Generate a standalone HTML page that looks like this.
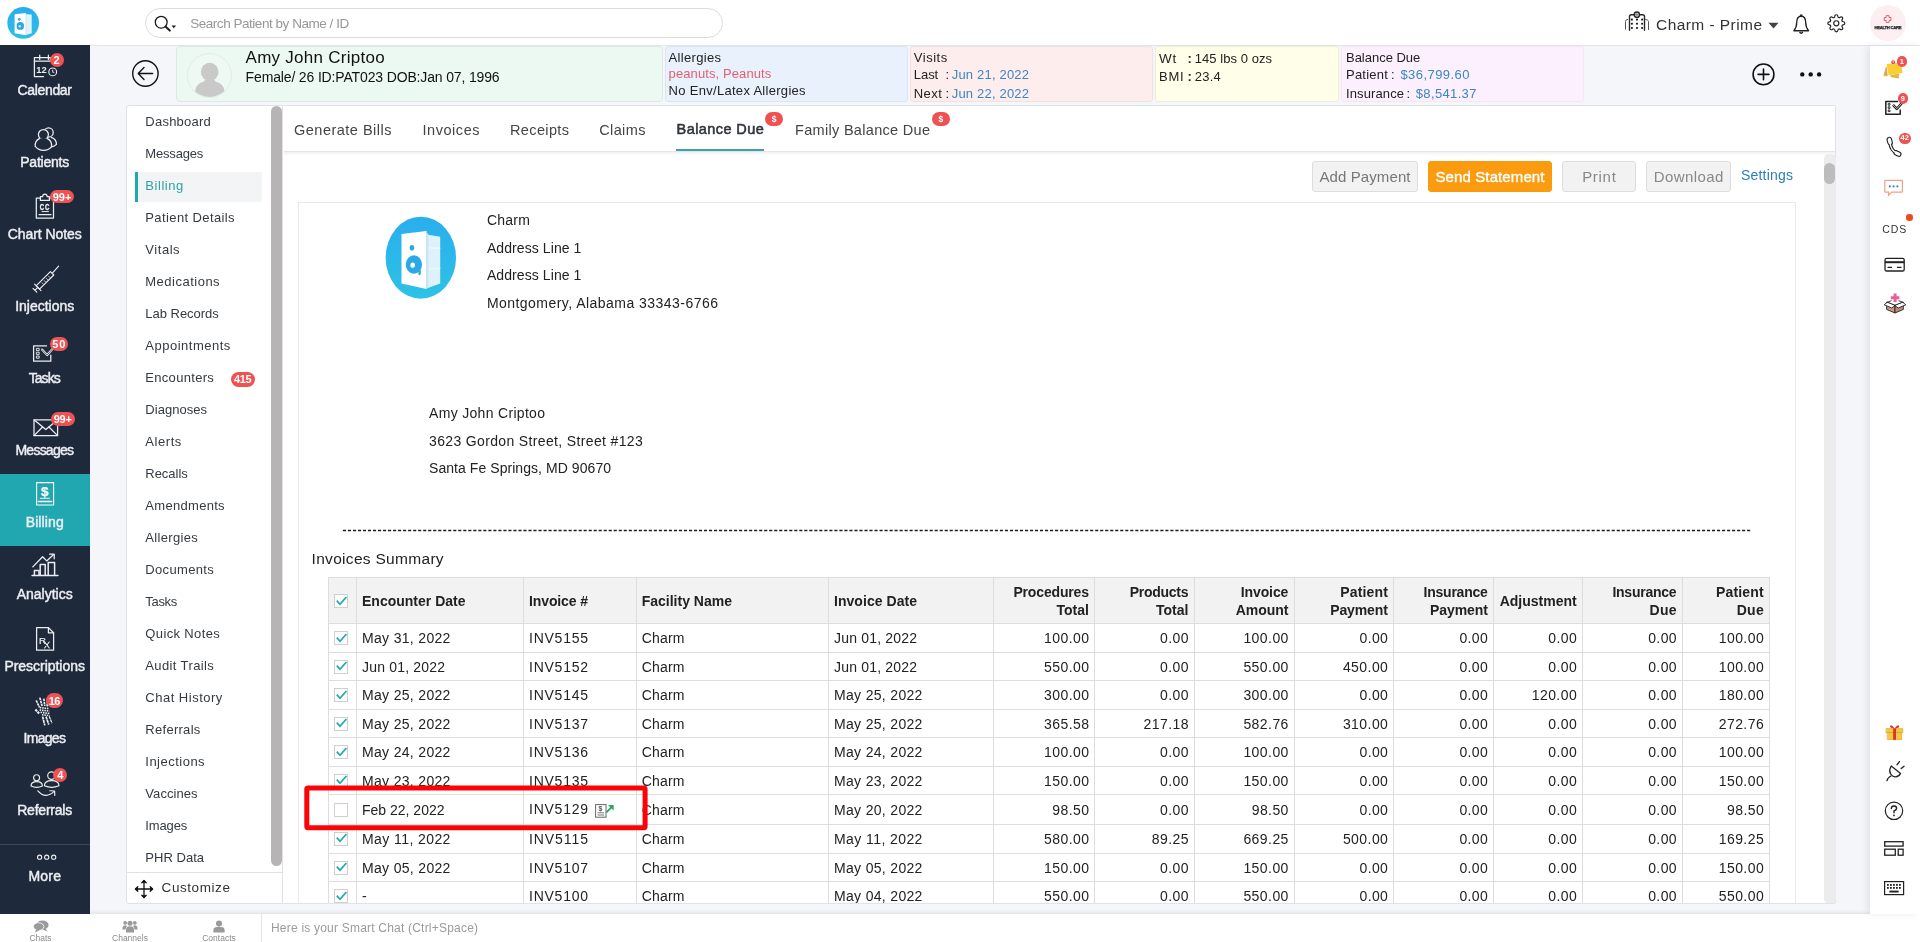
<!DOCTYPE html>
<html><head><meta charset="utf-8"><title>Balance Due</title>
<style>
html,body{margin:0;padding:0;}
body{width:1920px;height:942px;overflow:hidden;position:relative;background:#f5f6fa;font-family:"Liberation Sans",sans-serif;}
.t{position:absolute;white-space:pre;line-height:20px;height:20px;}
.b{position:absolute;box-sizing:border-box;}
svg{position:absolute;overflow:visible;}
.root{position:absolute;left:0;top:0;width:1920px;height:942px;overflow:hidden;will-change:transform;}
</style></head><body><div class="root">
<div class="b" style="left:0px;top:0px;width:1920px;height:46px;background:#fff;border-bottom:1px solid #e3e5ea;"></div>
<svg style="left:7px;top:7px" width="33" height="33" viewBox="0 0 33 33">
<defs><linearGradient id="lg1" x1="0" y1="0" x2="0" y2="1"><stop offset="0" stop-color="#29adee"/><stop offset="1" stop-color="#2cc0e4"/></linearGradient></defs>
<circle cx="16.2" cy="15.95" r="15.85" fill="url(#lg1)"/>
<path d="M7.6 7.2 L18.9 5.9 L18.9 28.2 L7.6 26.2 Z" fill="#fff"/>
<path d="M18.9 7.2 L24.7 7.6 L24.7 26.2 L18.9 27.9 Z" fill="#e3f3fb"/>
<path d="M18.9 6.4 L19.7 7.2 L19.7 27.6 L18.9 28 Z" fill="#cfe6f3"/>
<circle cx="12.3" cy="12.3" r="1.35" fill="#2ba6e0"/>
<ellipse cx="13.3" cy="18.9" rx="3.7" ry="3.9" fill="#2ba6e0"/><circle cx="12.8" cy="19.2" r="1.3" fill="#bfeafa"/>
</svg>
<div class="b" style="left:145px;top:8px;width:578px;height:30px;background:#fff;border:1px solid #dcdcdc;border-radius:15px;"></div>
<svg style="left:152px;top:13px" width="26" height="20" viewBox="0 0 26 20" fill="none" stroke="#1a1a1a" stroke-width="1.3">
<circle cx="9.2" cy="9.2" r="5.9"/><path d="M13.4 13.6 L17.8 17.6" stroke-width="2" stroke-linecap="round"/>
<path d="M19.6 12.4 L24 12.4 L21.8 15.2 Z" fill="#1a1a1a" stroke="none"/></svg>
<span class="t" style="top:13.9px;font-size:13.5px;color:#979797;letter-spacing:-0.464px;left:190.2px;">Search Patient by Name / ID</span>
<svg style="left:1616px;top:4px" width="50" height="38" viewBox="1616 4 50 38" fill="none" stroke="#2a2a2a" stroke-width="1.4" stroke-linecap="round" stroke-linejoin="round">
<path d="M1629.5 30.2 V16.6 Q1629.5 14.7 1631.4 14.7 H1642.6 Q1644.5 14.7 1644.5 16.6 V30.2"/>
<path d="M1627.7 19.3 Q1625.5 19.6 1625.5 21.4 V29" stroke="#555" stroke-width="1"/><path d="M1645.4 19.3 L1647.6 20.2 Q1648.5 20.6 1648.5 21.6 V29.6" stroke="#555" stroke-width="1"/>
<circle cx="1636.9" cy="14.7" r="2.6" fill="#fff" stroke-width="1.5"/><path d="M1636.9 13.4 V16 M1635.6 14.7 H1638.2" stroke="#888" stroke-width="1.3"/>
<g fill="#111" stroke="none"><circle cx="1631.9" cy="19.6" r="1.05"/><circle cx="1637" cy="19.6" r="1.05"/><circle cx="1642.1" cy="19.6" r="1.05"/>
<circle cx="1631.9" cy="23.8" r="1.05"/><circle cx="1637" cy="23.8" r="1.05"/><circle cx="1642.1" cy="23.8" r="1.05"/>
<circle cx="1631.9" cy="28" r="1.05"/><circle cx="1637" cy="28" r="1.05"/><circle cx="1642.1" cy="28" r="1.05"/></g></svg>
<span class="t" style="top:14.6px;font-size:15.5px;color:#333;letter-spacing:0.437px;left:1656px;">Charm - Prime</span>
<svg style="left:1768.4px;top:21.8px" width="11" height="7" viewBox="0 0 11 7"><path d="M0.5 0.8 H10.5 L5.5 6.4 Z" fill="#444"/></svg>
<svg style="left:1791.6px;top:13.2px" width="18.4" height="22.5" viewBox="0 0 18 22" fill="none" stroke="#222" stroke-width="1.3" stroke-linejoin="round">
<path d="M9 3.2 C5.6 3.2 4.6 6.2 4.6 9.4 C4.6 13.6 3.4 15.6 1.8 17.4 H16.2 C14.6 15.6 13.4 13.6 13.4 9.4 C13.4 6.2 12.4 3.2 9 3.2 Z"/>
<path d="M8 2.8 Q9 0.8 10 2.8" /><path d="M7.4 18.4 Q9 21.2 10.6 18.4"/></svg>
<svg style="left:1826.6px;top:13.8px" width="18.6" height="18.6" viewBox="0 0 24 24" fill="none" stroke="#222" stroke-width="1.5" stroke-linejoin="round">
<circle cx="12" cy="12" r="3.3"/>
<path d="M19.4 15a1.65 1.65 0 0 0 .33 1.82l.06.06a2 2 0 1 1-2.83 2.83l-.06-.06a1.65 1.65 0 0 0-1.82-.33 1.65 1.65 0 0 0-1 1.51V21a2 2 0 0 1-4 0v-.09A1.65 1.65 0 0 0 9 19.4a1.65 1.65 0 0 0-1.82.33l-.06.06a2 2 0 1 1-2.83-2.83l.06-.06a1.65 1.65 0 0 0 .33-1.82 1.65 1.65 0 0 0-1.51-1H3a2 2 0 0 1 0-4h.09A1.65 1.65 0 0 0 4.6 9a1.65 1.65 0 0 0-.33-1.82l-.06-.06a2 2 0 1 1 2.83-2.83l.06.06a1.65 1.65 0 0 0 1.82.33H9a1.65 1.65 0 0 0 1-1.51V3a2 2 0 0 1 4 0v.09a1.65 1.65 0 0 0 1 1.51 1.65 1.65 0 0 0 1.82-.33l.06-.06a2 2 0 1 1 2.83 2.83l-.06.06a1.65 1.65 0 0 0-.33 1.82V9a1.65 1.65 0 0 0 1.51 1H21a2 2 0 0 1 0 4h-.09a1.65 1.65 0 0 0-1.51 1z"/></svg>
<div class="b" style="left:1870px;top:5px;width:36px;height:36px;border-radius:50%;background:#fdeef1;"></div>
<svg style="left:1882.4px;top:15px" width="11.2" height="8" viewBox="0 0 14 10" fill="none" stroke="#e4566e" stroke-width="1.2">
<path d="M5.2 0.8 H8.8 V3.2 H11.2 V6.8 H8.8 V9.2 H5.2 V6.8 H2.8 V3.2 H5.2 Z"/></svg>
<span class="t" style="top:17.6px;font-size:4.2px;color:#222;letter-spacing:-0.279px;font-weight:700;left:1587.86px;width:600px;text-align:center;-webkit-text-stroke:0.25px #222;">HEALTH CARE</span>
<svg style="left:131px;top:59px" width="29" height="29" viewBox="0 0 29 29" fill="none" stroke="#111" stroke-width="1.4" stroke-linecap="round" stroke-linejoin="round">
<circle cx="14.4" cy="14.5" r="12.7"/><path d="M21.6 14.5 H7.6 M13 8.6 L7.2 14.5 L13 20.4"/></svg>
<div class="b" style="left:176px;top:46px;width:487px;height:56px;background:#ecf9f2;border:1px solid #dde9e3;border-radius:4px;"></div>
<svg style="left:186.8px;top:52.8px" width="45" height="45" viewBox="0 0 45 45">
<defs><clipPath id="avc"><circle cx="22.5" cy="22.5" r="21.4"/></clipPath></defs>
<circle cx="22.5" cy="22.5" r="22" fill="#eef9f4" stroke="#dde7e2" stroke-width="0.8"/>
<g clip-path="url(#avc)" fill="#c9c9c9"><ellipse cx="22.7" cy="18.8" rx="8.8" ry="9"/><path d="M8 45 V39 Q8 31 17 28.6 L19 25 H26.4 L28.4 28.6 Q37.6 31 37.6 39 V45 Z"/></g></svg>
<span class="t" style="top:47.5px;font-size:17px;color:#111;letter-spacing:0.260px;left:245.6px;">Amy John Criptoo</span>
<span class="t" style="top:67.0px;font-size:14px;color:#111;letter-spacing:-0.149px;left:245.6px;">Female/ 26 ID:PAT023 DOB:Jan 07, 1996</span>
<div class="b" style="left:665px;top:46px;width:243px;height:56px;background:#e9f1fc;border:1px solid #dfe5ee;border-radius:3px;"></div>
<span class="t" style="top:47.6px;font-size:13px;color:#222;letter-spacing:0.331px;left:668.6px;">Allergies</span>
<span class="t" style="top:63.6px;font-size:13px;color:#e26073;letter-spacing:0.101px;left:668.6px;">peanuts, Peanuts</span>
<span class="t" style="top:80.6px;font-size:13px;color:#222;letter-spacing:0.296px;left:668.6px;">No Env/Latex Allergies</span>
<div class="b" style="left:910px;top:46px;width:243px;height:56px;background:#fdeeed;border:1px solid #efe3e2;border-radius:3px;"></div>
<span class="t" style="top:47.6px;font-size:13px;color:#222;letter-spacing:0.515px;left:913.8px;">Visits</span>
<span class="t" style="top:64.8px;font-size:13px;color:#222;letter-spacing:-0.057px;left:913.8px;">Last</span>
<span class="t" style="top:64.8px;font-size:13px;color:#222;left:945.6px;">:</span>
<span class="t" style="top:64.8px;font-size:13px;color:#3b86c4;letter-spacing:0.194px;left:951.7px;">Jun 21, 2022</span>
<span class="t" style="top:83.6px;font-size:13px;color:#222;letter-spacing:0.424px;left:913.8px;">Next</span>
<span class="t" style="top:83.6px;font-size:13px;color:#222;left:945.6px;">:</span>
<span class="t" style="top:83.6px;font-size:13px;color:#3b86c4;letter-spacing:0.194px;left:951.7px;">Jun 22, 2022</span>
<div class="b" style="left:1155px;top:46px;width:184px;height:56px;background:#fffee8;border:1px solid #eeedda;border-radius:3px;"></div>
<span class="t" style="top:48.6px;font-size:13.5px;color:#222;letter-spacing:0.707px;left:1159px;">Wt</span>
<span class="t" style="top:48.6px;font-size:13px;color:#222;font-weight:700;left:1187.6px;">:</span>
<span class="t" style="top:48.6px;font-size:13px;color:#222;letter-spacing:0.050px;left:1194.8px;">145 lbs 0 ozs</span>
<span class="t" style="top:66.6px;font-size:13px;color:#222;letter-spacing:0.744px;left:1159px;">BMI</span>
<span class="t" style="top:66.6px;font-size:13px;color:#222;font-weight:700;left:1187.6px;">:</span>
<span class="t" style="top:66.6px;font-size:13px;color:#222;letter-spacing:0.234px;left:1194.8px;">23.4</span>
<div class="b" style="left:1341px;top:46px;width:243px;height:56px;background:#fceffe;border:1px solid #f3e6f5;border-radius:3px;"></div>
<span class="t" style="top:47.6px;font-size:13px;color:#222;letter-spacing:-0.014px;left:1346px;">Balance Due</span>
<span class="t" style="top:64.9px;font-size:13px;color:#222;letter-spacing:0.222px;left:1346px;">Patient</span>
<span class="t" style="top:64.9px;font-size:13px;color:#222;left:1391px;">:</span>
<span class="t" style="top:64.9px;font-size:13px;color:#3b86c4;letter-spacing:0.449px;left:1400.4px;">$36,799.60</span>
<span class="t" style="top:83.6px;font-size:13px;color:#222;letter-spacing:0.114px;left:1346px;">Insurance</span>
<span class="t" style="top:83.6px;font-size:13px;color:#222;left:1406.4px;">:</span>
<span class="t" style="top:83.6px;font-size:13px;color:#3b86c4;letter-spacing:0.347px;left:1415.8px;">$8,541.37</span>
<svg style="left:1751.4px;top:62px" width="25" height="25" viewBox="0 0 25 25" fill="none" stroke="#111" stroke-width="1.6" stroke-linecap="round">
<circle cx="12.5" cy="12.4" r="10.4"/><path d="M12.5 7 V17.8 M7.1 12.4 H17.9"/></svg>
<svg style="left:1798px;top:70px" width="26" height="8" viewBox="0 0 26 8" fill="#111"><circle cx="4.3" cy="4.4" r="2.2"/><circle cx="12.7" cy="4.4" r="2.2"/><circle cx="21.1" cy="4.4" r="2.2"/></svg>
<div class="b" style="left:126px;top:105px;width:157px;height:799px;background:#fff;border:1px solid #dfe1e5;border-radius:3px 0 0 3px;"></div>
<div class="b" style="left:135px;top:172px;width:127px;height:30px;background:#f3f4f6;"></div>
<div class="b" style="left:135px;top:172px;width:3px;height:30px;background:#21a7b0;"></div>
<span class="t" style="top:111.9px;font-size:13px;color:#343a41;letter-spacing:0.238px;left:145.3px;">Dashboard</span>
<span class="t" style="top:143.9px;font-size:13px;color:#343a41;letter-spacing:-0.178px;left:145.3px;">Messages</span>
<span class="t" style="top:175.9px;font-size:13px;color:#2fa3a8;letter-spacing:0.553px;left:145.3px;">Billing</span>
<span class="t" style="top:207.9px;font-size:13px;color:#343a41;letter-spacing:0.392px;left:145.3px;">Patient Details</span>
<span class="t" style="top:239.9px;font-size:13px;color:#343a41;letter-spacing:0.549px;left:145.3px;">Vitals</span>
<span class="t" style="top:271.9px;font-size:13px;color:#343a41;letter-spacing:0.494px;left:145.3px;">Medications</span>
<span class="t" style="top:303.9px;font-size:13px;color:#343a41;letter-spacing:-0.020px;left:145.3px;">Lab Records</span>
<span class="t" style="top:335.9px;font-size:13px;color:#343a41;letter-spacing:0.501px;left:145.3px;">Appointments</span>
<span class="t" style="top:367.9px;font-size:13px;color:#343a41;letter-spacing:0.305px;left:145.3px;">Encounters</span>
<span class="t" style="top:399.9px;font-size:13px;color:#343a41;letter-spacing:0.047px;left:145.3px;">Diagnoses</span>
<span class="t" style="top:431.9px;font-size:13px;color:#343a41;letter-spacing:0.554px;left:145.3px;">Alerts</span>
<span class="t" style="top:463.9px;font-size:13px;color:#343a41;letter-spacing:-0.021px;left:145.3px;">Recalls</span>
<span class="t" style="top:495.9px;font-size:13px;color:#343a41;letter-spacing:0.302px;left:145.3px;">Amendments</span>
<span class="t" style="top:527.9px;font-size:13px;color:#343a41;letter-spacing:0.331px;left:145.3px;">Allergies</span>
<span class="t" style="top:559.9px;font-size:13px;color:#343a41;letter-spacing:0.344px;left:145.3px;">Documents</span>
<span class="t" style="top:591.9px;font-size:13px;color:#343a41;letter-spacing:-0.307px;left:145.3px;">Tasks</span>
<span class="t" style="top:623.9px;font-size:13px;color:#343a41;letter-spacing:0.370px;left:145.3px;">Quick Notes</span>
<span class="t" style="top:655.9px;font-size:13px;color:#343a41;letter-spacing:0.382px;left:145.3px;">Audit Trails</span>
<span class="t" style="top:687.9px;font-size:13px;color:#343a41;letter-spacing:0.499px;left:145.3px;">Chat History</span>
<span class="t" style="top:719.9px;font-size:13px;color:#343a41;letter-spacing:0.283px;left:145.3px;">Referrals</span>
<span class="t" style="top:751.9px;font-size:13px;color:#343a41;letter-spacing:0.487px;left:145.3px;">Injections</span>
<span class="t" style="top:783.9px;font-size:13px;color:#343a41;letter-spacing:0.074px;left:145.3px;">Vaccines</span>
<span class="t" style="top:815.9px;font-size:13px;color:#343a41;letter-spacing:-0.126px;left:145.3px;">Images</span>
<span class="t" style="top:847.9px;font-size:13px;color:#343a41;letter-spacing:0.040px;left:145.3px;">PHR Data</span>
<div class="b" style="left:230.5px;top:371.5px;width:24.5px;height:15px;background:#ee5253;border-radius:7.5px;"></div>
<span class="t" style="top:369.3px;font-size:11px;color:#fff;letter-spacing:-0.426px;font-weight:700;left:-57.41px;width:600px;text-align:center;">415</span>
<div class="b" style="left:271px;top:106px;width:11px;height:760px;background:#b6b4b5;border-radius:5.5px;"></div>
<div class="b" style="left:127px;top:872px;width:155px;height:1px;background:#e1e1e1;"></div>
<svg style="left:134.3px;top:878.8px" width="20" height="20" viewBox="0 0 20 20" fill="none" stroke="#111" stroke-width="1.3" stroke-linecap="round" stroke-linejoin="round">
<path d="M10 1.6 V18.4 M1.6 10 H18.4"/><path d="M7.8 3.8 L10 1.4 L12.2 3.8 M7.8 16.2 L10 18.6 L12.2 16.2 M3.8 7.8 L1.4 10 L3.8 12.2 M16.2 7.8 L18.6 10 L16.2 12.2" fill="#111"/></svg>
<span class="t" style="top:877.5px;font-size:13.5px;color:#333;letter-spacing:0.567px;left:161.6px;">Customize</span>
<div class="b" style="left:283px;top:105px;width:1553px;height:799px;background:#fff;border:1px solid #e1e3e7;border-left:none;border-radius:0 2px 2px 0;"></div>
<div class="b" style="left:284px;top:151px;width:1551px;height:1px;background:#e4e4e4;"></div>
<div class="b" style="left:284px;top:152px;width:1551px;height:4px;background:linear-gradient(#f1f1f1,#fff);"></div>
<span class="t" style="top:119.8px;font-size:14.5px;color:#444;letter-spacing:0.495px;left:294px;">Generate Bills</span>
<span class="t" style="top:119.8px;font-size:14.5px;color:#444;letter-spacing:0.544px;left:422.5px;">Invoices</span>
<span class="t" style="top:119.8px;font-size:14.5px;color:#444;letter-spacing:0.370px;left:510px;">Receipts</span>
<span class="t" style="top:119.8px;font-size:14.5px;color:#444;letter-spacing:0.379px;left:599.2px;">Claims</span>
<span class="t" style="top:119.1px;font-size:14.5px;color:#30343a;letter-spacing:0.418px;left:676.6px;-webkit-text-stroke:0.55px #30343a;">Balance Due</span>
<div class="b" style="left:676px;top:149px;width:88px;height:2px;background:#38a5a9;"></div>
<span class="t" style="top:119.8px;font-size:14.5px;color:#444;letter-spacing:0.309px;left:795px;">Family Balance Due</span>
<div class="b" style="left:765px;top:111.8px;width:18px;height:14px;border-radius:7px;background:#ee5253;"></div>
<span class="t" style="top:109.1px;font-size:8.5px;color:#fff;font-weight:700;left:474.00px;width:600px;text-align:center;">$</span>
<div class="b" style="left:931.8px;top:111.8px;width:18px;height:14px;border-radius:7px;background:#ee5253;"></div>
<span class="t" style="top:109.1px;font-size:8.5px;color:#fff;font-weight:700;left:640.80px;width:600px;text-align:center;">$</span>
<div class="b" style="left:1312px;top:161px;width:106px;height:31px;border:1px solid #dddddd;border-radius:3px;background:#f2f2f2;"></div>
<span class="t" style="top:166.6px;font-size:15px;color:#777;letter-spacing:0.095px;left:1065.05px;width:600px;text-align:center;">Add Payment</span>
<div class="b" style="left:1428px;top:161px;width:124px;height:31px;border:1px solid #f79a0c;border-radius:3px;background:#fa9b10;"></div>
<span class="t" style="top:166.6px;font-size:15px;color:#fff;letter-spacing:0.110px;left:1190.06px;width:600px;text-align:center;-webkit-text-stroke:0.35px #fff;">Send Statement</span>
<div class="b" style="left:1562px;top:161px;width:74px;height:31px;border:1px solid #dddddd;border-radius:3px;background:#f2f2f2;"></div>
<span class="t" style="top:166.6px;font-size:15px;color:#888;letter-spacing:0.715px;left:1299.36px;width:600px;text-align:center;">Print</span>
<div class="b" style="left:1646px;top:161px;width:85px;height:31px;border:1px solid #dddddd;border-radius:3px;background:#f2f2f2;"></div>
<span class="t" style="top:166.6px;font-size:15px;color:#888;letter-spacing:0.399px;left:1388.70px;width:600px;text-align:center;">Download</span>
<span class="t" style="top:165.3px;font-size:14px;color:#2b7dbb;letter-spacing:0.202px;left:1741px;">Settings</span>
<div class="b" style="left:1824px;top:154px;width:12px;height:750px;background:#ececec;border-radius:5px 5px 5px 5px;"></div>
<div class="b" style="left:1824px;top:163px;width:11px;height:21px;background:#bcbcbc;border-radius:5.5px;"></div>
<div class="b" style="left:298px;top:202px;width:1498px;height:702px;background:#fff;border:1px solid #e9e9e9;border-bottom:none;"></div>
<svg style="left:385px;top:216px" width="72" height="84" viewBox="0 0 72 84">
<defs><linearGradient id="lg2" x1="0" y1="0" x2="0" y2="1"><stop offset="0" stop-color="#2aaeee"/><stop offset="1" stop-color="#2dc2e6"/></linearGradient></defs>
<ellipse cx="35.85" cy="41.65" rx="35.2" ry="41" fill="url(#lg2)"/>
<path d="M16.5 18 L41.5 14.9 L41.5 73 L16.5 67.4 Z" fill="#fff"/>
<path d="M41.5 18.5 L55.2 20.7 L55.2 67.4 L41.5 72.5 Z" fill="#dff1fb"/>
<path d="M41.5 15.6 L43.4 18.8 L43.4 71.8 L41.5 72.8 Z" fill="#cde6f4"/>
<path d="M44 31 L55.2 31.6 L55.2 33 L44 32.4 Z M44 52 L55.2 51.6 L55.2 53 L44 53.4 Z" fill="#eef8fd"/>
<ellipse cx="26.9" cy="31.7" rx="2.3" ry="2.8" fill="#2ba8e6"/>
<ellipse cx="28.9" cy="48.5" rx="8.1" ry="9.3" fill="#2ba8e6"/><ellipse cx="27.7" cy="49.2" rx="2.3" ry="2.6" fill="#fff"/>
<path d="M33.4 52.6 Q37.6 53.4 35 59.4 L33 58 Q34.6 55.4 32 55 Z" fill="#2ba8e6"/>
</svg>
<span class="t" style="top:210.0px;font-size:14px;color:#222;letter-spacing:0.249px;left:486.9px;">Charm</span>
<span class="t" style="top:238.0px;font-size:14px;color:#222;letter-spacing:0.086px;left:486.9px;">Address Line 1</span>
<span class="t" style="top:265.2px;font-size:14px;color:#222;letter-spacing:0.086px;left:486.9px;">Address Line 1</span>
<span class="t" style="top:293.2px;font-size:14px;color:#222;letter-spacing:0.461px;left:486.9px;">Montgomery, Alabama 33343-6766</span>
<span class="t" style="top:403.0px;font-size:14px;color:#222;letter-spacing:0.316px;left:429px;">Amy John Criptoo</span>
<span class="t" style="top:430.8px;font-size:14px;color:#222;letter-spacing:0.353px;left:429px;">3623 Gordon Street, Street #123</span>
<span class="t" style="top:457.8px;font-size:14px;color:#222;letter-spacing:0.059px;left:429px;">Santa Fe Springs, MD 90670</span>
<svg style="left:0;top:520px" width="1920" height="20"><line x1="342.9" y1="10.45" x2="1750.2" y2="10.45" stroke="#1c1c1c" stroke-width="1.35" stroke-dasharray="3.1 1.915"/></svg>
<span class="t" style="top:549.3px;font-size:15.5px;color:#222;letter-spacing:0.302px;left:311.6px;">Invoices Summary</span>
<div class="b" style="left:328px;top:577px;width:1441px;height:46px;background:#f2f2f2;"></div>
<div class="b" style="left:328px;top:577px;width:1442px;height:1px;background:#dddddd;"></div>
<div class="b" style="left:328px;top:623px;width:1442px;height:1px;background:#dddddd;"></div>
<div class="b" style="left:328px;top:652px;width:1442px;height:1px;background:#dddddd;"></div>
<div class="b" style="left:328px;top:680px;width:1442px;height:1px;background:#dddddd;"></div>
<div class="b" style="left:328px;top:709px;width:1442px;height:1px;background:#dddddd;"></div>
<div class="b" style="left:328px;top:737px;width:1442px;height:1px;background:#dddddd;"></div>
<div class="b" style="left:328px;top:766px;width:1442px;height:1px;background:#dddddd;"></div>
<div class="b" style="left:328px;top:794px;width:1442px;height:1px;background:#dddddd;"></div>
<div class="b" style="left:328px;top:824px;width:1442px;height:1px;background:#dddddd;"></div>
<div class="b" style="left:328px;top:853px;width:1442px;height:1px;background:#dddddd;"></div>
<div class="b" style="left:328px;top:881px;width:1442px;height:1px;background:#dddddd;"></div>
<div class="b" style="left:328px;top:577px;width:1px;height:327px;background:#dddddd;"></div>
<div class="b" style="left:356px;top:577px;width:1px;height:327px;background:#dddddd;"></div>
<div class="b" style="left:523px;top:577px;width:1px;height:327px;background:#dddddd;"></div>
<div class="b" style="left:636px;top:577px;width:1px;height:327px;background:#dddddd;"></div>
<div class="b" style="left:828px;top:577px;width:1px;height:327px;background:#dddddd;"></div>
<div class="b" style="left:993px;top:577px;width:1px;height:327px;background:#dddddd;"></div>
<div class="b" style="left:1094px;top:577px;width:1px;height:327px;background:#dddddd;"></div>
<div class="b" style="left:1194px;top:577px;width:1px;height:327px;background:#dddddd;"></div>
<div class="b" style="left:1294px;top:577px;width:1px;height:327px;background:#dddddd;"></div>
<div class="b" style="left:1393px;top:577px;width:1px;height:327px;background:#dddddd;"></div>
<div class="b" style="left:1493px;top:577px;width:1px;height:327px;background:#dddddd;"></div>
<div class="b" style="left:1582px;top:577px;width:1px;height:327px;background:#dddddd;"></div>
<div class="b" style="left:1682px;top:577px;width:1px;height:327px;background:#dddddd;"></div>
<div class="b" style="left:1769px;top:577px;width:1px;height:327px;background:#dddddd;"></div>
<div class="b" style="left:334.3px;top:594px;width:14px;height:14px;background:#fff;border:1px solid #cfcfcf;"></div>
<svg style="left:335.3px;top:594.5px" width="13" height="12" viewBox="0 0 13 12" fill="none" stroke="#21a7b0" stroke-width="1.7"><path d="M1.8 5.6 L5 9.2 L11.4 2"/></svg>
<span class="t" style="top:591.0px;font-size:14px;color:#222;letter-spacing:0.003px;font-weight:700;left:362px;">Encounter Date</span>
<span class="t" style="top:591.0px;font-size:14px;color:#222;letter-spacing:-0.114px;font-weight:700;left:529px;">Invoice #</span>
<span class="t" style="top:591.0px;font-size:14px;color:#222;letter-spacing:0.004px;font-weight:700;left:641.7px;">Facility Name</span>
<span class="t" style="top:591.0px;font-size:14px;color:#222;letter-spacing:0.048px;font-weight:700;left:834px;">Invoice Date</span>
<span class="t" style="top:581.8px;font-size:14px;color:#222;letter-spacing:-0.159px;font-weight:700;right:831.16px;">Procedures</span>
<span class="t" style="top:600.0px;font-size:14px;color:#222;letter-spacing:0.025px;font-weight:700;right:830.97px;">Total</span>
<span class="t" style="top:581.8px;font-size:14px;color:#222;letter-spacing:-0.282px;font-weight:700;right:731.78px;">Products</span>
<span class="t" style="top:600.0px;font-size:14px;color:#222;letter-spacing:0.025px;font-weight:700;right:731.47px;">Total</span>
<span class="t" style="top:581.8px;font-size:14px;color:#222;letter-spacing:-0.089px;font-weight:700;right:631.69px;">Invoice</span>
<span class="t" style="top:600.0px;font-size:14px;color:#222;letter-spacing:-0.035px;font-weight:700;right:631.63px;">Amount</span>
<span class="t" style="top:581.8px;font-size:14px;color:#222;letter-spacing:0.171px;font-weight:700;right:531.93px;">Patient</span>
<span class="t" style="top:600.0px;font-size:14px;color:#222;letter-spacing:-0.109px;font-weight:700;right:532.21px;">Payment</span>
<span class="t" style="top:581.8px;font-size:14px;color:#222;letter-spacing:-0.242px;font-weight:700;right:432.44px;">Insurance</span>
<span class="t" style="top:600.0px;font-size:14px;color:#222;letter-spacing:-0.109px;font-weight:700;right:432.31px;">Payment</span>
<span class="t" style="top:581.8px;font-size:14px;color:#222;letter-spacing:-0.242px;font-weight:700;right:243.64px;">Insurance</span>
<span class="t" style="top:600.0px;font-size:14px;color:#222;letter-spacing:0.277px;font-weight:700;right:243.12px;">Due</span>
<span class="t" style="top:581.8px;font-size:14px;color:#222;letter-spacing:0.171px;font-weight:700;right:156.13px;">Patient</span>
<span class="t" style="top:600.0px;font-size:14px;color:#222;letter-spacing:0.277px;font-weight:700;right:156.02px;">Due</span>
<span class="t" style="top:591.0px;font-size:14px;color:#222;letter-spacing:0.000px;font-weight:700;right:343.30px;">Adjustment</span>
<div class="b" style="left:334.3px;top:631.0px;width:14px;height:14px;background:#fff;border:1px solid #cfcfcf;"></div>
<svg style="left:335.3px;top:631.5px" width="13" height="12" viewBox="0 0 13 12" fill="none" stroke="#21a7b0" stroke-width="1.7"><path d="M1.8 5.6 L5 9.2 L11.4 2"/></svg>
<span class="t" style="top:628.0px;font-size:14px;color:#222;letter-spacing:0.325px;left:362px;">May 31, 2022</span>
<span class="t" style="top:628.0px;font-size:14px;color:#222;letter-spacing:0.753px;left:529px;">INV5155</span>
<span class="t" style="top:628.0px;font-size:14px;color:#222;letter-spacing:0.199px;left:641.7px;">Charm</span>
<span class="t" style="top:628.0px;font-size:14px;color:#222;letter-spacing:0.186px;left:834px;">Jun 01, 2022</span>
<span class="t" style="top:628.0px;font-size:14px;color:#222;letter-spacing:0.437px;right:830.56px;">100.00</span>
<span class="t" style="top:628.0px;font-size:14px;color:#222;letter-spacing:0.385px;right:731.12px;">0.00</span>
<span class="t" style="top:628.0px;font-size:14px;color:#222;letter-spacing:0.437px;right:631.16px;">100.00</span>
<span class="t" style="top:628.0px;font-size:14px;color:#222;letter-spacing:0.385px;right:531.72px;">0.00</span>
<span class="t" style="top:628.0px;font-size:14px;color:#222;letter-spacing:0.385px;right:431.82px;">0.00</span>
<span class="t" style="top:628.0px;font-size:14px;color:#222;letter-spacing:0.385px;right:342.92px;">0.00</span>
<span class="t" style="top:628.0px;font-size:14px;color:#222;letter-spacing:0.385px;right:243.02px;">0.00</span>
<span class="t" style="top:628.0px;font-size:14px;color:#222;letter-spacing:0.437px;right:155.86px;">100.00</span>
<div class="b" style="left:334.3px;top:659.6px;width:14px;height:14px;background:#fff;border:1px solid #cfcfcf;"></div>
<svg style="left:335.3px;top:660.1px" width="13" height="12" viewBox="0 0 13 12" fill="none" stroke="#21a7b0" stroke-width="1.7"><path d="M1.8 5.6 L5 9.2 L11.4 2"/></svg>
<span class="t" style="top:656.6px;font-size:14px;color:#222;letter-spacing:0.186px;left:362px;">Jun 01, 2022</span>
<span class="t" style="top:656.6px;font-size:14px;color:#222;letter-spacing:0.753px;left:529px;">INV5152</span>
<span class="t" style="top:656.6px;font-size:14px;color:#222;letter-spacing:0.199px;left:641.7px;">Charm</span>
<span class="t" style="top:656.6px;font-size:14px;color:#222;letter-spacing:0.186px;left:834px;">Jun 01, 2022</span>
<span class="t" style="top:656.6px;font-size:14px;color:#222;letter-spacing:0.437px;right:830.56px;">550.00</span>
<span class="t" style="top:656.6px;font-size:14px;color:#222;letter-spacing:0.385px;right:731.12px;">0.00</span>
<span class="t" style="top:656.6px;font-size:14px;color:#222;letter-spacing:0.437px;right:631.16px;">550.00</span>
<span class="t" style="top:656.6px;font-size:14px;color:#222;letter-spacing:0.437px;right:531.66px;">450.00</span>
<span class="t" style="top:656.6px;font-size:14px;color:#222;letter-spacing:0.385px;right:431.82px;">0.00</span>
<span class="t" style="top:656.6px;font-size:14px;color:#222;letter-spacing:0.385px;right:342.92px;">0.00</span>
<span class="t" style="top:656.6px;font-size:14px;color:#222;letter-spacing:0.385px;right:243.02px;">0.00</span>
<span class="t" style="top:656.6px;font-size:14px;color:#222;letter-spacing:0.437px;right:155.86px;">100.00</span>
<div class="b" style="left:334.3px;top:688.1500000000001px;width:14px;height:14px;background:#fff;border:1px solid #cfcfcf;"></div>
<svg style="left:335.3px;top:688.6500000000001px" width="13" height="12" viewBox="0 0 13 12" fill="none" stroke="#21a7b0" stroke-width="1.7"><path d="M1.8 5.6 L5 9.2 L11.4 2"/></svg>
<span class="t" style="top:685.2px;font-size:14px;color:#222;letter-spacing:0.325px;left:362px;">May 25, 2022</span>
<span class="t" style="top:685.2px;font-size:14px;color:#222;letter-spacing:0.753px;left:529px;">INV5145</span>
<span class="t" style="top:685.2px;font-size:14px;color:#222;letter-spacing:0.199px;left:641.7px;">Charm</span>
<span class="t" style="top:685.2px;font-size:14px;color:#222;letter-spacing:0.325px;left:834px;">May 25, 2022</span>
<span class="t" style="top:685.2px;font-size:14px;color:#222;letter-spacing:0.437px;right:830.56px;">300.00</span>
<span class="t" style="top:685.2px;font-size:14px;color:#222;letter-spacing:0.385px;right:731.12px;">0.00</span>
<span class="t" style="top:685.2px;font-size:14px;color:#222;letter-spacing:0.437px;right:631.16px;">300.00</span>
<span class="t" style="top:685.2px;font-size:14px;color:#222;letter-spacing:0.385px;right:531.72px;">0.00</span>
<span class="t" style="top:685.2px;font-size:14px;color:#222;letter-spacing:0.385px;right:431.82px;">0.00</span>
<span class="t" style="top:685.2px;font-size:14px;color:#222;letter-spacing:0.437px;right:342.86px;">120.00</span>
<span class="t" style="top:685.2px;font-size:14px;color:#222;letter-spacing:0.385px;right:243.02px;">0.00</span>
<span class="t" style="top:685.2px;font-size:14px;color:#222;letter-spacing:0.437px;right:155.86px;">180.00</span>
<div class="b" style="left:334.3px;top:716.6px;width:14px;height:14px;background:#fff;border:1px solid #cfcfcf;"></div>
<svg style="left:335.3px;top:717.1px" width="13" height="12" viewBox="0 0 13 12" fill="none" stroke="#21a7b0" stroke-width="1.7"><path d="M1.8 5.6 L5 9.2 L11.4 2"/></svg>
<span class="t" style="top:713.6px;font-size:14px;color:#222;letter-spacing:0.325px;left:362px;">May 25, 2022</span>
<span class="t" style="top:713.6px;font-size:14px;color:#222;letter-spacing:0.753px;left:529px;">INV5137</span>
<span class="t" style="top:713.6px;font-size:14px;color:#222;letter-spacing:0.199px;left:641.7px;">Charm</span>
<span class="t" style="top:713.6px;font-size:14px;color:#222;letter-spacing:0.325px;left:834px;">May 25, 2022</span>
<span class="t" style="top:713.6px;font-size:14px;color:#222;letter-spacing:0.437px;right:830.56px;">365.58</span>
<span class="t" style="top:713.6px;font-size:14px;color:#222;letter-spacing:0.437px;right:731.06px;">217.18</span>
<span class="t" style="top:713.6px;font-size:14px;color:#222;letter-spacing:0.437px;right:631.16px;">582.76</span>
<span class="t" style="top:713.6px;font-size:14px;color:#222;letter-spacing:0.437px;right:531.66px;">310.00</span>
<span class="t" style="top:713.6px;font-size:14px;color:#222;letter-spacing:0.385px;right:431.82px;">0.00</span>
<span class="t" style="top:713.6px;font-size:14px;color:#222;letter-spacing:0.385px;right:342.92px;">0.00</span>
<span class="t" style="top:713.6px;font-size:14px;color:#222;letter-spacing:0.385px;right:243.02px;">0.00</span>
<span class="t" style="top:713.6px;font-size:14px;color:#222;letter-spacing:0.437px;right:155.86px;">272.76</span>
<div class="b" style="left:334.3px;top:745.05px;width:14px;height:14px;background:#fff;border:1px solid #cfcfcf;"></div>
<svg style="left:335.3px;top:745.55px" width="13" height="12" viewBox="0 0 13 12" fill="none" stroke="#21a7b0" stroke-width="1.7"><path d="M1.8 5.6 L5 9.2 L11.4 2"/></svg>
<span class="t" style="top:742.0px;font-size:14px;color:#222;letter-spacing:0.325px;left:362px;">May 24, 2022</span>
<span class="t" style="top:742.0px;font-size:14px;color:#222;letter-spacing:0.753px;left:529px;">INV5136</span>
<span class="t" style="top:742.0px;font-size:14px;color:#222;letter-spacing:0.199px;left:641.7px;">Charm</span>
<span class="t" style="top:742.0px;font-size:14px;color:#222;letter-spacing:0.325px;left:834px;">May 24, 2022</span>
<span class="t" style="top:742.0px;font-size:14px;color:#222;letter-spacing:0.437px;right:830.56px;">100.00</span>
<span class="t" style="top:742.0px;font-size:14px;color:#222;letter-spacing:0.385px;right:731.12px;">0.00</span>
<span class="t" style="top:742.0px;font-size:14px;color:#222;letter-spacing:0.437px;right:631.16px;">100.00</span>
<span class="t" style="top:742.0px;font-size:14px;color:#222;letter-spacing:0.385px;right:531.72px;">0.00</span>
<span class="t" style="top:742.0px;font-size:14px;color:#222;letter-spacing:0.385px;right:431.82px;">0.00</span>
<span class="t" style="top:742.0px;font-size:14px;color:#222;letter-spacing:0.385px;right:342.92px;">0.00</span>
<span class="t" style="top:742.0px;font-size:14px;color:#222;letter-spacing:0.385px;right:243.02px;">0.00</span>
<span class="t" style="top:742.0px;font-size:14px;color:#222;letter-spacing:0.437px;right:155.86px;">100.00</span>
<div class="b" style="left:334.3px;top:773.6px;width:14px;height:14px;background:#fff;border:1px solid #cfcfcf;"></div>
<svg style="left:335.3px;top:774.1px" width="13" height="12" viewBox="0 0 13 12" fill="none" stroke="#21a7b0" stroke-width="1.7"><path d="M1.8 5.6 L5 9.2 L11.4 2"/></svg>
<span class="t" style="top:770.6px;font-size:14px;color:#222;letter-spacing:0.325px;left:362px;">May 23, 2022</span>
<span class="t" style="top:770.6px;font-size:14px;color:#222;letter-spacing:0.753px;left:529px;">INV5135</span>
<span class="t" style="top:770.6px;font-size:14px;color:#222;letter-spacing:0.199px;left:641.7px;">Charm</span>
<span class="t" style="top:770.6px;font-size:14px;color:#222;letter-spacing:0.325px;left:834px;">May 23, 2022</span>
<span class="t" style="top:770.6px;font-size:14px;color:#222;letter-spacing:0.437px;right:830.56px;">150.00</span>
<span class="t" style="top:770.6px;font-size:14px;color:#222;letter-spacing:0.385px;right:731.12px;">0.00</span>
<span class="t" style="top:770.6px;font-size:14px;color:#222;letter-spacing:0.437px;right:631.16px;">150.00</span>
<span class="t" style="top:770.6px;font-size:14px;color:#222;letter-spacing:0.385px;right:531.72px;">0.00</span>
<span class="t" style="top:770.6px;font-size:14px;color:#222;letter-spacing:0.385px;right:431.82px;">0.00</span>
<span class="t" style="top:770.6px;font-size:14px;color:#222;letter-spacing:0.385px;right:342.92px;">0.00</span>
<span class="t" style="top:770.6px;font-size:14px;color:#222;letter-spacing:0.385px;right:243.02px;">0.00</span>
<span class="t" style="top:770.6px;font-size:14px;color:#222;letter-spacing:0.437px;right:155.86px;">150.00</span>
<div class="b" style="left:334.3px;top:802.5px;width:14px;height:14px;background:#fff;border:1px solid #cfcfcf;"></div>
<span class="t" style="top:799.5px;font-size:14px;color:#222;letter-spacing:-0.000px;left:362px;">Feb 22, 2022</span>
<span class="t" style="top:798.5px;font-size:14px;color:#222;letter-spacing:0.753px;left:529px;">INV5129</span>
<span class="t" style="top:799.5px;font-size:14px;color:#222;letter-spacing:0.199px;left:641.7px;">Charm</span>
<span class="t" style="top:799.5px;font-size:14px;color:#222;letter-spacing:0.325px;left:834px;">May 20, 2022</span>
<span class="t" style="top:799.5px;font-size:14px;color:#222;letter-spacing:0.417px;right:830.58px;">98.50</span>
<span class="t" style="top:799.5px;font-size:14px;color:#222;letter-spacing:0.385px;right:731.12px;">0.00</span>
<span class="t" style="top:799.5px;font-size:14px;color:#222;letter-spacing:0.417px;right:631.18px;">98.50</span>
<span class="t" style="top:799.5px;font-size:14px;color:#222;letter-spacing:0.385px;right:531.72px;">0.00</span>
<span class="t" style="top:799.5px;font-size:14px;color:#222;letter-spacing:0.385px;right:431.82px;">0.00</span>
<span class="t" style="top:799.5px;font-size:14px;color:#222;letter-spacing:0.385px;right:342.92px;">0.00</span>
<span class="t" style="top:799.5px;font-size:14px;color:#222;letter-spacing:0.385px;right:243.02px;">0.00</span>
<span class="t" style="top:799.5px;font-size:14px;color:#222;letter-spacing:0.417px;right:155.88px;">98.50</span>
<div class="b" style="left:334.3px;top:831.9000000000001px;width:14px;height:14px;background:#fff;border:1px solid #cfcfcf;"></div>
<svg style="left:335.3px;top:832.4000000000001px" width="13" height="12" viewBox="0 0 13 12" fill="none" stroke="#21a7b0" stroke-width="1.7"><path d="M1.8 5.6 L5 9.2 L11.4 2"/></svg>
<span class="t" style="top:828.9px;font-size:14px;color:#222;letter-spacing:0.419px;left:362px;">May 11, 2022</span>
<span class="t" style="top:828.9px;font-size:14px;color:#222;letter-spacing:0.927px;left:529px;">INV5115</span>
<span class="t" style="top:828.9px;font-size:14px;color:#222;letter-spacing:0.199px;left:641.7px;">Charm</span>
<span class="t" style="top:828.9px;font-size:14px;color:#222;letter-spacing:0.419px;left:834px;">May 11, 2022</span>
<span class="t" style="top:828.9px;font-size:14px;color:#222;letter-spacing:0.437px;right:830.56px;">580.00</span>
<span class="t" style="top:828.9px;font-size:14px;color:#222;letter-spacing:0.417px;right:731.08px;">89.25</span>
<span class="t" style="top:828.9px;font-size:14px;color:#222;letter-spacing:0.437px;right:631.16px;">669.25</span>
<span class="t" style="top:828.9px;font-size:14px;color:#222;letter-spacing:0.437px;right:531.66px;">500.00</span>
<span class="t" style="top:828.9px;font-size:14px;color:#222;letter-spacing:0.385px;right:431.82px;">0.00</span>
<span class="t" style="top:828.9px;font-size:14px;color:#222;letter-spacing:0.385px;right:342.92px;">0.00</span>
<span class="t" style="top:828.9px;font-size:14px;color:#222;letter-spacing:0.385px;right:243.02px;">0.00</span>
<span class="t" style="top:828.9px;font-size:14px;color:#222;letter-spacing:0.437px;right:155.86px;">169.25</span>
<div class="b" style="left:334.3px;top:860.75px;width:14px;height:14px;background:#fff;border:1px solid #cfcfcf;"></div>
<svg style="left:335.3px;top:861.25px" width="13" height="12" viewBox="0 0 13 12" fill="none" stroke="#21a7b0" stroke-width="1.7"><path d="M1.8 5.6 L5 9.2 L11.4 2"/></svg>
<span class="t" style="top:857.8px;font-size:14px;color:#222;letter-spacing:0.325px;left:362px;">May 05, 2022</span>
<span class="t" style="top:857.8px;font-size:14px;color:#222;letter-spacing:0.753px;left:529px;">INV5107</span>
<span class="t" style="top:857.8px;font-size:14px;color:#222;letter-spacing:0.199px;left:641.7px;">Charm</span>
<span class="t" style="top:857.8px;font-size:14px;color:#222;letter-spacing:0.325px;left:834px;">May 05, 2022</span>
<span class="t" style="top:857.8px;font-size:14px;color:#222;letter-spacing:0.437px;right:830.56px;">150.00</span>
<span class="t" style="top:857.8px;font-size:14px;color:#222;letter-spacing:0.385px;right:731.12px;">0.00</span>
<span class="t" style="top:857.8px;font-size:14px;color:#222;letter-spacing:0.437px;right:631.16px;">150.00</span>
<span class="t" style="top:857.8px;font-size:14px;color:#222;letter-spacing:0.385px;right:531.72px;">0.00</span>
<span class="t" style="top:857.8px;font-size:14px;color:#222;letter-spacing:0.385px;right:431.82px;">0.00</span>
<span class="t" style="top:857.8px;font-size:14px;color:#222;letter-spacing:0.385px;right:342.92px;">0.00</span>
<span class="t" style="top:857.8px;font-size:14px;color:#222;letter-spacing:0.385px;right:243.02px;">0.00</span>
<span class="t" style="top:857.8px;font-size:14px;color:#222;letter-spacing:0.437px;right:155.86px;">150.00</span>
<div class="b" style="left:334.3px;top:889.4000000000001px;width:14px;height:14px;background:#fff;border:1px solid #cfcfcf;"></div>
<svg style="left:335.3px;top:889.9000000000001px" width="13" height="12" viewBox="0 0 13 12" fill="none" stroke="#21a7b0" stroke-width="1.7"><path d="M1.8 5.6 L5 9.2 L11.4 2"/></svg>
<span class="t" style="top:886.4px;font-size:14px;color:#222;left:362px;">-</span>
<span class="t" style="top:886.4px;font-size:14px;color:#222;letter-spacing:0.753px;left:529px;">INV5100</span>
<span class="t" style="top:886.4px;font-size:14px;color:#222;letter-spacing:0.199px;left:641.7px;">Charm</span>
<span class="t" style="top:886.4px;font-size:14px;color:#222;letter-spacing:0.325px;left:834px;">May 04, 2022</span>
<span class="t" style="top:886.4px;font-size:14px;color:#222;letter-spacing:0.437px;right:830.56px;">550.00</span>
<span class="t" style="top:886.4px;font-size:14px;color:#222;letter-spacing:0.385px;right:731.12px;">0.00</span>
<span class="t" style="top:886.4px;font-size:14px;color:#222;letter-spacing:0.437px;right:631.16px;">550.00</span>
<span class="t" style="top:886.4px;font-size:14px;color:#222;letter-spacing:0.385px;right:531.72px;">0.00</span>
<span class="t" style="top:886.4px;font-size:14px;color:#222;letter-spacing:0.385px;right:431.82px;">0.00</span>
<span class="t" style="top:886.4px;font-size:14px;color:#222;letter-spacing:0.385px;right:342.92px;">0.00</span>
<span class="t" style="top:886.4px;font-size:14px;color:#222;letter-spacing:0.385px;right:243.02px;">0.00</span>
<span class="t" style="top:886.4px;font-size:14px;color:#222;letter-spacing:0.437px;right:155.86px;">550.00</span>
<svg style="left:595px;top:803px" width="20" height="15" viewBox="0 0 20 15" fill="none">
<rect x="0.6" y="1.6" width="10.4" height="12.6" stroke="#666" stroke-width="1"/><path d="M2.6 9.8 H9 M2.6 12 H9" stroke="#666" stroke-width="0.9"/>
<text x="3.4" y="8.4" font-family="Liberation Sans" font-size="7" font-weight="700" fill="#555">$</text>
<path d="M11.4 9.4 L17 3.6" stroke="#2aa65a" stroke-width="1.8"/><path d="M13 2 H18.6 V7.6 Z" fill="#2aa65a"/></svg>
<div class="b" style="left:283px;top:904px;width:1554px;height:9px;background:#f5f6fa;"></div>
<div class="b" style="left:284px;top:903px;width:1551px;height:1px;background:#e1e3e7;"></div>
<svg style="left:0;top:0" width="1920" height="942"><rect x="306.8" y="787.9" width="338.3" height="39.9" rx="1.2" fill="none" stroke="#fb0408" stroke-width="5" stroke-linejoin="round"/></svg>
<div class="b" style="left:0px;top:914px;width:1920px;height:28px;background:#fff;box-shadow:0 -1px 4px rgba(0,0,0,0.11);"></div>
<div class="b" style="left:261px;top:914px;width:1px;height:28px;background:#e4e4e4;"></div>
<span class="t" style="top:918.0px;font-size:12px;color:#9b9b9b;letter-spacing:0.208px;left:271px;">Here is your Smart Chat (Ctrl+Space)</span>
<svg style="left:33px;top:919.6px" width="16" height="13" viewBox="0 0 16 13" fill="#9a9a9a">
<ellipse cx="9.4" cy="5" rx="6.2" ry="4.6"/><path d="M12 8 L14.6 11.6 L9.4 9.4 Z"/>
<ellipse cx="5.6" cy="6.6" rx="5.2" ry="3.9" stroke="#fff" stroke-width="0.8"/><path d="M3.4 9.2 L1.6 12.4 L6.6 10.2 Z"/></svg>
<span class="t" style="top:927.5px;font-size:8.5px;color:#8a8a8a;left:-259.50px;width:600px;text-align:center;">Chats</span>
<svg style="left:122px;top:919.6px" width="16" height="13" viewBox="0 0 16 13" fill="#9a9a9a">
<circle cx="3.2" cy="2.8" r="1.9"/><circle cx="12.8" cy="2.8" r="1.9"/><circle cx="8" cy="3.2" r="2.5"/>
<path d="M0.4 9.4 Q0.4 5.2 3.2 5.2 Q4.4 5.2 5 6 Q3.6 7.4 3.6 9.4 Z"/><path d="M15.6 9.4 Q15.6 5.2 12.8 5.2 Q11.6 5.2 11 6 Q12.4 7.4 12.4 9.4 Z"/>
<path d="M4 12.4 V9.6 Q4 6.2 8 6.2 Q12 6.2 12 9.6 V12.4 Z"/></svg>
<span class="t" style="top:927.5px;font-size:8.5px;color:#8a8a8a;left:-170.00px;width:600px;text-align:center;">Channels</span>
<svg style="left:213px;top:919.6px" width="12" height="13" viewBox="0 0 12 13" fill="#9a9a9a">
<circle cx="6" cy="3.4" r="3"/><path d="M0.4 12.4 V10 Q0.4 6.8 6 6.8 Q11.6 6.8 11.6 10 V12.4 Z"/></svg>
<span class="t" style="top:927.5px;font-size:8.5px;color:#8a8a8a;left:-81.00px;width:600px;text-align:center;">Contacts</span>
<div class="b" style="left:0px;top:45px;width:90px;height:869px;background:#1e293b;"></div>
<div class="b" style="left:0px;top:474px;width:90px;height:72px;background:#21a7b0;"></div>
<div class="b" style="left:0px;top:844px;width:90px;height:1px;background:#3b4759;"></div>
<span class="t" style="top:80.2px;font-size:14px;color:#eceef1;letter-spacing:-0.330px;left:-255.46px;width:600px;text-align:center;-webkit-text-stroke:0.45px #eceef1;">Calendar</span>
<span class="t" style="top:152.2px;font-size:14px;color:#eceef1;letter-spacing:-0.226px;left:-255.41px;width:600px;text-align:center;-webkit-text-stroke:0.45px #eceef1;">Patients</span>
<span class="t" style="top:224.2px;font-size:14px;color:#eceef1;letter-spacing:-0.069px;left:-255.33px;width:600px;text-align:center;-webkit-text-stroke:0.45px #eceef1;">Chart Notes</span>
<span class="t" style="top:296.2px;font-size:14px;color:#eceef1;letter-spacing:-0.016px;left:-255.31px;width:600px;text-align:center;-webkit-text-stroke:0.45px #eceef1;">Injections</span>
<span class="t" style="top:368.2px;font-size:14px;color:#eceef1;letter-spacing:-0.946px;left:-255.77px;width:600px;text-align:center;-webkit-text-stroke:0.45px #eceef1;">Tasks</span>
<span class="t" style="top:440.2px;font-size:14px;color:#eceef1;letter-spacing:-0.758px;left:-255.68px;width:600px;text-align:center;-webkit-text-stroke:0.45px #eceef1;">Messages</span>
<span class="t" style="top:512.2px;font-size:14px;color:#eceef1;letter-spacing:0.108px;left:-255.25px;width:600px;text-align:center;-webkit-text-stroke:0.45px #eceef1;">Billing</span>
<span class="t" style="top:584.2px;font-size:14px;color:#eceef1;letter-spacing:-0.002px;left:-255.30px;width:600px;text-align:center;-webkit-text-stroke:0.45px #eceef1;">Analytics</span>
<span class="t" style="top:656.2px;font-size:14px;color:#eceef1;letter-spacing:-0.034px;left:-255.32px;width:600px;text-align:center;-webkit-text-stroke:0.45px #eceef1;">Prescriptions</span>
<span class="t" style="top:728.2px;font-size:14px;color:#eceef1;letter-spacing:-0.681px;left:-255.64px;width:600px;text-align:center;-webkit-text-stroke:0.45px #eceef1;">Images</span>
<span class="t" style="top:800.2px;font-size:14px;color:#eceef1;letter-spacing:-0.224px;left:-255.41px;width:600px;text-align:center;-webkit-text-stroke:0.45px #eceef1;">Referrals</span>
<span class="t" style="top:866.2px;font-size:14px;color:#eceef1;letter-spacing:0.202px;left:-255.20px;width:600px;text-align:center;-webkit-text-stroke:0.45px #eceef1;">More</span>
<svg style="left:0;top:0" width="90" height="942" viewBox="0 0 90 942" fill="none" stroke="#eceef1" stroke-width="1.25" stroke-linejoin="round" stroke-linecap="round">
<g><path d="M34.4 57.6 H50.4 V60.8 M43.6 76.6 H34.4 V57.6"/><path d="M34.4 61.2 H50"/><path d="M39.7 55 V59.4 M48.4 55 V59.4"/>
<circle cx="52.7" cy="71.9" r="3.9" stroke-width="1.1"/><path d="M52.7 70 V72.3 H54" stroke-width="0.9"/>
<text x="36.2" y="73.4" font-family="Liberation Sans" font-weight="700" font-size="9.4" fill="#eceef1" stroke="none">12</text></g>
<g><circle cx="48.6" cy="132.4" r="4.6"/><path d="M51.4 137.4 Q56.6 139.4 56.4 144.4 Q54.6 146.6 51.6 146.8"/>
<circle cx="43.4" cy="134.6" r="5" fill="#1e293b"/><path d="M39.4 138.6 Q34.8 140.6 35.2 146.4 Q38.6 150.4 43.6 150.4 Q48.6 150.4 51.6 146.6 Q52 140.6 47.4 138.6" fill="#1e293b"/></g>
<g><path d="M40.4 198.2 H36.3 V218 H53.5 V198.2 H49.4"/><path d="M40.4 200.4 V196.6 H42.6 Q42.8 194.2 44.9 194.2 Q47 194.2 47.2 196.6 H49.4 V200.4 Z"/>
<path d="M42 211.6 H48.5" stroke-width="1"/><path d="M39 214.6 H51.1" stroke-width="1.1"/>
<text transform="translate(39.8,209.6) scale(0.78,1.1)" font-family="Liberation Sans" font-weight="700" font-size="7.8" fill="#eceef1" stroke="#eceef1" stroke-width="0.3" letter-spacing="0.9">CC</text></g>
<g stroke-width="1.15"><path d="M58.6 266.2 L52.6 272.8"/><path d="M50.4 271.6 L53.8 275 L39.5 289.2 L36.1 285.8 Z"/>
<path d="M34.6 284.2 L41 290.6"/><path d="M37.6 287.6 L35 290.2"/><path d="M33 288.4 L36.8 292.2"/>
<path d="M44.2 280.6 L45.4 281.8 M46.4 278.4 L47.6 279.6 M48.6 276.2 L49.8 277.4 M42 282.8 L43.2 284" stroke-width="0.8"/></g>
<g><path d="M46.6 345.8 H33.6 V361.2 H50.8 V355"/><path d="M42 349.6 L47.2 355 L53.6 347.6" stroke-width="2.2"/><path d="M42 349.6 L47.2 355 L53.6 347.6" stroke="#1e293b" stroke-width="0.7"/>
<g stroke-width="0.9"><rect x="36.8" y="348.4" width="2.4" height="2.2"/><rect x="36.8" y="352.2" width="2.4" height="2.2"/><rect x="36.8" y="356" width="2.4" height="2.2"/></g></g>
<g><rect x="34" y="419.8" width="23.6" height="15.8"/><path d="M34 419.8 L45.8 429.6 L57.6 419.8"/><path d="M34 435.6 L42.6 427 M57.6 435.6 L49 427"/></g>
<g stroke="#fff"><rect x="36.6" y="482.6" width="17" height="22.4" stroke-width="1.1"/><path d="M40.2 498.3 H49.4" stroke-width="0.9"/><path d="M38.4 501.4 H51.6" stroke-width="1.5"/>
<text x="44.9" y="496.2" text-anchor="middle" font-family="Liberation Sans" font-weight="700" font-size="13.6" fill="#fff" stroke="#fff" stroke-width="0.25">$</text></g>
<g><path d="M32 575.5 H58" stroke-width="1.4"/><path d="M34.4 575 V570.4 H39 V575" stroke-width="1.5"/><path d="M40.2 575 V564.6 H45.2 V575" stroke-width="1.5"/><path d="M48.2 575 V562.6 H54.6 V575" stroke-width="1.5"/>
<path d="M32.8 566.9 L42.6 556.8 L46.7 560.9 L53.6 554.6" stroke-width="1.3"/><path d="M49.6 554.2 H54.2 V558.8" stroke-width="1.3"/></g>
<g><path d="M36.6 627.6 H48.4 L53.6 632.8 V650.2 H36.6 Z"/><path d="M48.4 627.6 V632.8 H53.6"/>
<text x="39" y="643.6" font-family="Liberation Sans" font-size="9.6" fill="#eceef1" stroke="#eceef1" stroke-width="0.2">R</text>
<path d="M44.4 641.6 L49.2 648 M49.2 642 L44.6 648" stroke-width="1.1"/></g>
<g stroke-linecap="butt" stroke-width="1.7" stroke-dasharray="2.6 0.6">
<path d="M36.2 700.4 L39.5 707.4"/><path d="M39.8 697.6 L42.1 706"/><path d="M43.8 698.6 L44.8 706"/><path d="M47.4 700.6 L47.2 706.4"/></g>
<g stroke-linecap="butt"><path d="M35.4 709.6 L39.2 713.6" stroke-width="2.2" stroke-dasharray="2.4 0.6"/>
<path d="M39.8 707.6 L49 708.6 M39.6 710 L49.4 711 M40.6 712.4 L49.6 713.4 M42 714.8 L49.6 715.6" stroke-width="1.6" stroke-dasharray="1.5 0.9"/>
<path d="M42.6 716.6 L44.8 725.4" stroke-width="1.7" stroke-dasharray="3 0.5"/><path d="M46 716.6 L48.8 724.6" stroke-width="1.7" stroke-dasharray="3 0.5"/><path d="M49.2 716.2 L52 723.2" stroke-width="1.2" stroke-dasharray="3 0.5"/></g>
<g stroke-width="1.15"><circle cx="36.6" cy="777.7" r="3"/><path d="M31 786 Q31 781.6 36.7 781.6 Q42.4 781.6 42.4 786 Q36.7 788.6 31 786 Z"/>
<circle cx="51.5" cy="775.6" r="3.8"/><path d="M44.4 785.8 Q44.4 780.6 51.7 780.6 Q59 780.6 59 785.8 Q51.7 788.8 44.4 785.8 Z"/>
<path d="M37.8 790.8 Q45.6 799.6 54.2 791.4"/><path d="M49.8 790.8 L54.6 791 L54.8 795.4"/></g>
<g stroke-width="1.1"><circle cx="39.6" cy="857.2" r="2.1"/><circle cx="46.7" cy="857.2" r="2.1"/><circle cx="53.7" cy="857.2" r="2.1"/></g>
</svg>
<div class="b" style="left:49.5px;top:53px;width:14.0px;height:14px;border-radius:7.0px;background:#ee5253;"></div>
<span class="t" style="top:50.3px;font-size:11px;color:#fff;font-weight:700;left:-243.50px;width:600px;text-align:center;">2</span>
<div class="b" style="left:50px;top:189.5px;width:24px;height:13.5px;border-radius:6.75px;background:#ee5253;"></div>
<span class="t" style="top:186.6px;font-size:11px;color:#fff;letter-spacing:-0.029px;font-weight:700;left:-238.01px;width:600px;text-align:center;">99+</span>
<div class="b" style="left:49.5px;top:336.5px;width:18.5px;height:14.0px;border-radius:7.0px;background:#ee5253;"></div>
<span class="t" style="top:333.8px;font-size:11px;color:#fff;letter-spacing:0.866px;font-weight:700;left:-240.82px;width:600px;text-align:center;">50</span>
<div class="b" style="left:51px;top:412px;width:23.5px;height:14px;border-radius:7.0px;background:#ee5253;"></div>
<span class="t" style="top:409.3px;font-size:11px;color:#fff;letter-spacing:-0.279px;font-weight:700;left:-237.39px;width:600px;text-align:center;">99+</span>
<div class="b" style="left:46px;top:693px;width:17px;height:15px;border-radius:7.5px;background:#ee5253;"></div>
<span class="t" style="top:690.8px;font-size:11px;color:#fff;letter-spacing:-0.634px;font-weight:700;left:-245.82px;width:600px;text-align:center;">16</span>
<div class="b" style="left:53.4px;top:767.8px;width:14.000000000000007px;height:14.0px;border-radius:7.0px;background:#ee5253;"></div>
<span class="t" style="top:765.1px;font-size:11px;color:#fff;font-weight:700;left:-239.60px;width:600px;text-align:center;">4</span>
<div class="b" style="left:1870px;top:46px;width:50px;height:868px;background:#fff;box-shadow:-3px 0 7px rgba(0,0,0,0.08);"></div>
<svg style="left:1870px;top:0" width="50" height="942" viewBox="1870 0 50 942" fill="none" stroke-linejoin="round" stroke-linecap="round">
<g><path d="M1884 75.4 L1886.2 67 L1887.4 75.4 Z" fill="#e7a43a" stroke="#b98228" stroke-width="0.4"/>
<path d="M1891.4 75.2 L1899 74 L1898.4 78.2 L1891 76.8 Z" fill="#eeb738" stroke="#c48f28" stroke-width="0.4"/>
<path d="M1886.6 64 L1901.2 62.6 L1902.6 72.8 L1888.6 75.4 Z" fill="#f9cf35"/>
<circle cx="1893.2" cy="62.2" r="1.9" fill="#e2414d"/><circle cx="1893.2" cy="62" r="0.7" fill="#fff"/></g>
<g stroke="#222" stroke-width="1.5" stroke-linecap="butt"><path d="M1898 101.4 H1885.8 V114.2 H1900.2 V109.6"/><path d="M1893 104.8 L1896.8 108.8 L1902.8 102" stroke-width="2.6"/><path d="M1893.2 105 L1896.8 108.7 L1902.6 102.2" stroke="#fff" stroke-width="0.7"/>
<g stroke-width="0.9"><rect x="1888.2" y="103.6" width="1.8" height="1.6"/><rect x="1888.2" y="106.8" width="1.8" height="1.6"/><rect x="1888.2" y="110" width="1.8" height="1.6"/></g></g>
<g stroke-linecap="round"><g stroke="#222"><path d="M1889.3 139.6 L1890.1 142.6" stroke-width="5.6"/><path d="M1896.2 152.8 L1898.8 154.2" stroke-width="5.4"/><path d="M1890 142.4 Q1890.6 150.4 1897 153.2" stroke-width="3.5"/></g>
<g stroke="#fff"><path d="M1889.3 139.6 L1890.1 142.6" stroke-width="3.4"/><path d="M1896.2 152.8 L1898.8 154.2" stroke-width="3.2"/><path d="M1890 142.4 Q1890.6 150.4 1897 153.2" stroke-width="1.3"/></g></g>
<g><path d="M1885.6 180.4 H1901.6 Q1902.4 180.4 1902.4 181.2 V191.4 Q1902.4 192.2 1901.6 192.2 H1891.6 L1888.4 195.6 L1888.8 192.2 H1885.6 Q1884.8 192.2 1884.8 191.4 V181.2 Q1884.8 180.4 1885.6 180.4 Z" stroke="#f0a184" stroke-width="1.2"/>
<circle cx="1889.8" cy="186.4" r="1.05" fill="#3a7fb8"/><circle cx="1893.6" cy="186.4" r="1.05" fill="#3a7fb8"/><circle cx="1897.4" cy="186.4" r="1.05" fill="#3a7fb8"/></g>
<g stroke="#222" stroke-width="1.3"><rect x="1885" y="258.4" width="19.2" height="12.6" rx="1.6"/><path d="M1885 262.2 H1904.2" stroke-width="2" stroke-linecap="butt"/><path d="M1888 267.4 H1891.6 M1897.4 267.4 H1901" stroke-width="1.1"/></g>
<g stroke="#222" stroke-width="0.9"><path d="M1887 302.4 L1895 305.6 V313 L1887 309.6 Z" fill="#cf9a80"/><path d="M1903 302.4 L1895 305.6 V313 L1903 309.6 Z" fill="#c08a70"/>
<path d="M1887 302.4 L1884.2 304.8 L1891.8 308 L1895 305.6 Z M1903 302.4 L1905.8 304.8 L1898.2 308 L1895 305.6 Z" fill="#fff"/>
<path d="M1887 302.4 L1891 300.8 M1903 302.4 L1899 300.8"/>
<path d="M1893.6 293.4 H1896.6 V296.2 H1899.4 V299.2 H1896.6 V302 H1893.6 V299.2 H1890.8 V296.2 H1893.6 Z" fill="#ee5a9a" stroke="none"/></g>
<g><rect x="1886.4" y="728.6" width="16.4" height="4" fill="#f6c83c" stroke="#d19a22" stroke-width="0.6"/><rect x="1887.6" y="732.6" width="14" height="7" fill="#f6c83c" stroke="#d19a22" stroke-width="0.6"/>
<rect x="1893.2" y="728.4" width="2.8" height="11.4" fill="#d8342c"/><path d="M1894.6 728.4 Q1890.4 723 1890 726.6 Q1890 728.4 1894.6 728.4 Q1898.8 723 1899.2 726.6 Q1899.2 728.4 1894.6 728.4 Z" fill="#d8342c"/></g>
<g stroke="#222" stroke-width="1.3"><path d="M1891.2 766 L1900.6 773.4 Q1897.6 778.6 1892.6 776 Q1887.6 772.2 1891.2 766 Z"/><path d="M1897 764.8 L1899.4 761.6 M1901.2 768.6 L1904 766.2"/><path d="M1891 776 Q1887.6 777.6 1887 780.6"/></g>
<g stroke="#222" stroke-width="1.2"><circle cx="1894" cy="810.8" r="8.7"/><path d="M1891.4 808.6 Q1891.4 806 1894 806 Q1896.6 806 1896.6 808.2 Q1896.6 809.8 1894 811 V812.8" stroke-width="1.4"/><circle cx="1894" cy="815.4" r="0.9" fill="#222" stroke="none"/></g>
<g stroke="#222" stroke-width="1.3" stroke-linejoin="miter"><rect x="1884.7" y="841.7" width="18.4" height="4.4"/><rect x="1884.7" y="849.2" width="10.6" height="6"/><rect x="1898.2" y="849.2" width="4.9" height="6"/></g>
<g stroke="#222" stroke-width="1.2" stroke-linejoin="miter"><rect x="1884.6" y="881.6" width="19" height="13"/><g fill="#222" stroke="none">
<rect x="1887" y="884" width="1.8" height="1.8"/><rect x="1890" y="884" width="1.8" height="1.8"/><rect x="1893" y="884" width="1.8" height="1.8"/><rect x="1896" y="884" width="1.8" height="1.8"/><rect x="1899" y="884" width="1.8" height="1.8"/>
<rect x="1887" y="887" width="1.8" height="1.8"/><rect x="1890" y="887" width="1.8" height="1.8"/><rect x="1893" y="887" width="1.8" height="1.8"/><rect x="1896" y="887" width="1.8" height="1.8"/><rect x="1899" y="887" width="1.8" height="1.8"/>
<rect x="1889.4" y="890.6" width="9.2" height="1.9"/></g></g>
</svg>
<div class="b" style="left:1896.6000000000001px;top:56.2px;width:10.6px;height:11px;border-radius:5.5px;background:#ee5253;"></div>
<span class="t" style="top:51.9px;font-size:7.5px;color:#fff;font-weight:700;left:1601.90px;width:600px;text-align:center;">1</span>
<div class="b" style="left:1897.5px;top:93.4px;width:10.8px;height:11px;border-radius:5.5px;background:#ee5253;"></div>
<span class="t" style="top:89.1px;font-size:7.5px;color:#fff;font-weight:700;left:1602.90px;width:600px;text-align:center;">9</span>
<div class="b" style="left:1898.5px;top:132.6px;width:12.4px;height:11px;border-radius:5.5px;background:#ee5253;"></div>
<span class="t" style="top:128.3px;font-size:7.5px;color:#fff;font-weight:700;left:1604.70px;width:600px;text-align:center;">42</span>
<span class="t" style="top:219.2px;font-size:10.5px;color:#333;letter-spacing:0.915px;left:1882.2px;">CDS</span>
<div class="b" style="left:1906.2px;top:214.4px;width:6.4px;height:6.4px;background:#f0491f;border-radius:3.2px;"></div>
</div></body></html>
